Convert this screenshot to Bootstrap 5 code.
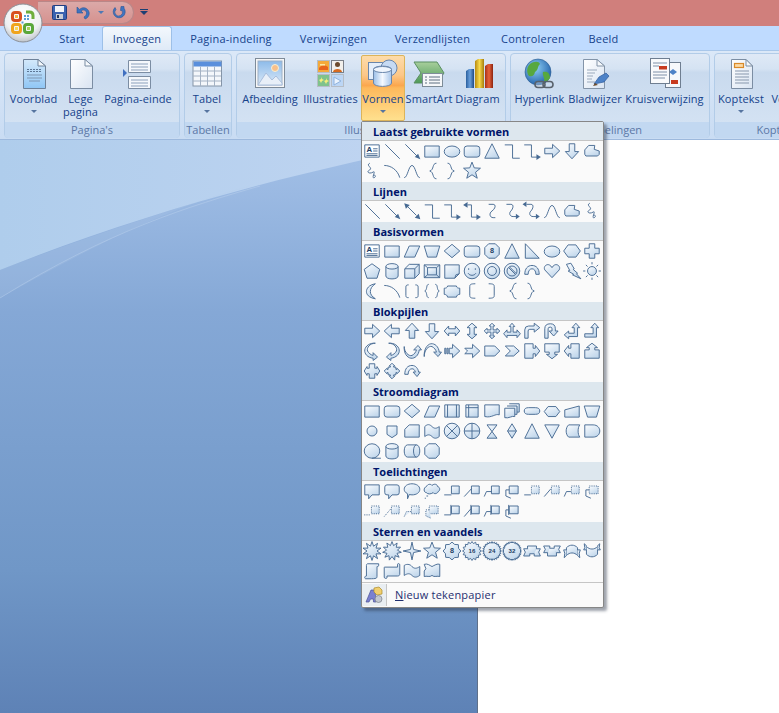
<!DOCTYPE html>
<html lang="nl">
<head>
  <meta charset="UTF-8">
  <meta name="viewport" content="width=device-width, initial-scale=1.0">
  <title>Word 2007 - Vormen</title>
  <link href="https://cdn.jsdelivr.net/npm/bootstrap@5.3.3/dist/css/bootstrap.min.css" rel="stylesheet">
  <style>
    html, body { height: 100%; }
    body { font-family: "Open Sans", "Liberation Sans", sans-serif; font-size: 11px; color: #15428b; background: #6f95c6; overflow: hidden; }
    .app-shell { width: 779px; height: 713px; overflow: hidden; }

    /* title bar and quick access */
    .title-strip { height: 26px; background: #d07f7c; padding-left: 38px; }
    .qat-pill { width: 96px; height: 23px; margin-top: 1px; border: 1px solid #b98788; border-left: 0; border-radius: 0 12px 12px 0 / 0 12px 12px 0; background: linear-gradient(#dba9a8, #d6928f); padding-left: 14px; gap: 8px; }
    .qat-drop { width: 5px; height: 3px; border-top: 3px solid #4d79b5; border-left: 3px solid transparent; border-right: 3px solid transparent; box-sizing: content-box; height: 0; width: 0; }
    .qat-custom { margin-left: 6px; margin-top: 9px; width: 8px; }
    .qat-custom b { display: block; height: 1px; background: #1d3f73; margin-bottom: 1px; }
    .qat-custom i { display: block; width: 0; border-top: 4px solid #1d3f73; border-left: 4px solid transparent; border-right: 4px solid transparent; }
    .office-orb { position: absolute; left: 3px; top: 3px; width: 40px; height: 40px; z-index: 5; }

    /* tabs */
    .tab-strip { height: 24px; padding-left: 44px; background: #bfdbff; flex-wrap: nowrap; }
    .tab-strip .nav-link { padding: 3px 0 0; height: 24px; text-align: center; color: #15428b; font-size: 11px; line-height: 17px; letter-spacing: .2px; border: 1px solid transparent; border-bottom: 0; border-radius: 3px 3px 0 0; }
    .tab-strip .nav-link.active { background: linear-gradient(#f3f8fd, #dfeaf7); border-color: #9dc0e8; color: #15428b; }
    .tw-start { width: 56px; margin-right: 2px; }
    .tw-inv { width: 70px; }
    .tw-pag { width: 118px; }
    .tw-ver { width: 87px; }
    .tw-vrz { width: 111px; }
    .tw-con { width: 90px; }
    .tw-bee { width: 51px; }

    /* ribbon */
    .ribbon-band { height: 90px; padding: 2px 0 0 4px; gap: 4px; background: linear-gradient(#dbe8f8, #c9dcf3); border-top: 1px solid #a9c7ea; border-bottom: 1px solid #9db9dd; overflow: hidden; }
    .rb-group { height: 85px; flex: 0 0 auto; border: 1px solid #b2cce8; border-radius: 4px; background: linear-gradient(#dfe9f6 0, #d5e3f3 18%, #c9daee 22%, #d6e4f4 100%); padding: 1px 3px 0 1px; }
    .rb-label { height: 16px; margin: 0 -3px 0 -1px; background: #c2d8f1; text-align: center; line-height: 15px; color: #5b77a6; font-size: 11px; border-radius: 0 0 3px 3px; white-space: nowrap; overflow: hidden; }
    .rb-body { height: 67px; }
    .rb-btn { display: flex; flex-direction: column; align-items: center; flex: 0 0 auto; height: 66px; padding: 2px 0 0; border: 1px solid transparent; border-radius: 2px; color: #15428b; font-size: 11px; line-height: 13px; letter-spacing: .1px; --bs-btn-active-color: #15428b; }
    .rb-btn svg { width: 32px; height: 32px; flex: 0 0 auto; margin-bottom: 2px; }
    .rb-btn.is-open { border-color: #dcb45a; background: linear-gradient(#fddcaa 0, #fcc788 30%, #fba74e 46%, #fdb95c 50%, #ffe08e 100%); }
    .rb-caret { display: block; width: 0; margin-top: 5px; border-top: 3px solid #56749f; border-left: 3px solid transparent; border-right: 3px solid transparent; }
    .w-vb { width: 55px; } .w-lp { width: 39px; } .w-pe { width: 76px; } .w-tb { width: 42px; }
    .w-af { width: 64px; } .w-il { width: 57px; margin-right: 2px; } .w-vo { width: 44px; } .w-sa { width: 48px; } .w-di { width: 49px; }
    .w-hy { width: 55px; } .w-bl { width: 56px; } .w-kr { width: 83px; }
    .w-ko { width: 50px; } .w-vt { width: 60px; }
    .gw-pag { width: 176px; } .gw-tab { width: 48px; } .gw-ill { width: 270px; } .gw-kop { width: 200px; } .gw-kt { width: 196px; }

    /* workspace */
    .work-area { height: 573px; background: #6f95c6; }
    .work-back { position: absolute; left: 0; top: 0; width: 100%; height: 100%; }
    .doc-sheet { width: 302px; background: #fff; border-left: 1px solid #5f7089; z-index: 1; }

    /* shapes menu */
    .shape-menu { left: 361px; top: 121px; width: 243px; height: 487px; padding: 0; margin: 0; border: 1px solid #868686; border-radius: 2px; background: #fafafa; box-shadow: 3px 3px 3px rgba(40, 50, 70, .45); font-size: 11px; z-index: 10; }
    .shape-head { height: 19px; margin: 0; padding: 2px 0 0 11px; background: #dde7ee; border-bottom: 1px solid #c5c5c5; font-weight: 700; font-size: 11px; line-height: 16px; color: #00156a; }
    .shape-grid { display: grid; grid-template-columns: repeat(12, 20px); grid-auto-rows: 20px; padding: 0 0 1px; }
    .shape-grid svg { width: 20px; height: 20px; display: block; }
    .shape-foot { height: 24px; border-top: 1px solid #c5c5c5; }
    .foot-icon { width: 25px; margin: 1px 0 0; background: #e9eef2; border-right: 1px solid #c5c5c5; }
    .foot-icon svg { width: 20px; height: 20px; }
    .foot-text { padding: 2px 0 0 8px; color: #1f2f6f; font-size: 11px; letter-spacing: .2px; }
  </style>
</head>
<body>
<div class="app-shell position-relative">

  <svg width="0" height="0" class="position-absolute">
    <defs>
      <linearGradient id="sf" x1="0" y1="0" x2="0.6" y2="1"><stop offset="0" stop-color="#fbfdff"/><stop offset="1" stop-color="#c3d8ec"/></linearGradient>
      <linearGradient id="pageWhite" x1="0" y1="0" x2="1" y2="1"><stop offset="0" stop-color="#fff"/><stop offset="1" stop-color="#d9e4f2"/></linearGradient>
      <linearGradient id="pageBlue" x1="0" y1="0" x2="0" y2="1"><stop offset="0" stop-color="#d4e9fb"/><stop offset="1" stop-color="#8fc6f5"/></linearGradient>
      <linearGradient id="barB" x1="0" y1="0" x2="1" y2="0"><stop offset="0" stop-color="#2a5f9e"/><stop offset=".5" stop-color="#6aa0dc"/><stop offset="1" stop-color="#1f4a85"/></linearGradient>
      <linearGradient id="barY" x1="0" y1="0" x2="1" y2="0"><stop offset="0" stop-color="#b78a10"/><stop offset=".5" stop-color="#f7d94c"/><stop offset="1" stop-color="#a67c0c"/></linearGradient>
      <linearGradient id="barR" x1="0" y1="0" x2="1" y2="0"><stop offset="0" stop-color="#a5301a"/><stop offset=".5" stop-color="#e8623c"/><stop offset="1" stop-color="#8c2410"/></linearGradient>
      <radialGradient id="globeFill" cx=".4" cy=".35" r=".7"><stop offset="0" stop-color="#8fd0f5"/><stop offset="1" stop-color="#1f5ea8"/></radialGradient>
      <linearGradient id="sky" x1="0" y1="0" x2="0" y2="1"><stop offset="0" stop-color="#8dbbea"/><stop offset="1" stop-color="#dbe9f7"/></linearGradient>
      <linearGradient id="smartG" x1="0" y1="0" x2="0" y2="1"><stop offset="0" stop-color="#a8cf9c"/><stop offset="1" stop-color="#4d9a58"/></linearGradient>
      <linearGradient id="cylF" x1="0" y1="0" x2="1" y2="0"><stop offset="0" stop-color="#9bbfe8"/><stop offset=".5" stop-color="#f5f9ff"/><stop offset="1" stop-color="#a8c6ea"/></linearGradient>
      <radialGradient id="orbFill" cx=".5" cy=".3" r=".8"><stop offset="0" stop-color="#fff"/><stop offset=".6" stop-color="#eef0f2"/><stop offset="1" stop-color="#aab1bb"/></radialGradient>
    </defs>
  </svg>

  <svg class="office-orb" viewBox="0 0 40 40">
    <circle cx="20" cy="20" r="19" fill="url(#orbFill)" stroke="#8b8f96"/>
    <g fill="none" stroke-width="3">
      <rect x="9.5" y="9.5" width="8" height="8" rx="2.5" stroke="#d8501f"/>
      <rect x="9.5" y="21.5" width="8" height="8" rx="2.5" stroke="#f0a41d"/>
      <rect x="21.5" y="21.5" width="8" height="8" rx="2.5" stroke="#5aa73a"/>
      <path d="M23 9H26.5Q30 9 30 12.5V16" stroke="#6fae3c"/>
    </g>
    <rect x="12" y="12" width="3" height="3" fill="#f4b73f"/>
    <rect x="12" y="24" width="3" height="3" fill="#f9d65a"/>
    <rect x="24" y="24" width="3" height="3" fill="#a4d25c"/>
    <path d="M21 12h2v2h-2ZM24 12h2v2h-2ZM21 15h2v2h-2ZM24 15h2v2h-2ZM18.5 18.5h2v2h-2Z" fill="#5b9fd6"/>
  </svg>

  <header class="title-strip d-flex">
    <div class="qat-pill d-flex align-items-center">
      <svg width="15" height="15" viewBox="0 0 15 15"><rect x=".5" y=".5" width="14" height="14" rx="1" fill="#3b62b0" stroke="#223f80"/><rect x="3" y="1" width="9" height="6" fill="#f1f4fa"/><rect x="4" y="9" width="7" height="5" fill="#c9cdd6"/><rect x="5" y="10" width="2" height="3" fill="#26365e"/></svg>
      <svg width="15" height="15" viewBox="0 0 15 15"><path d="M2 2V8H8L6 6C8 4.2 11 5 11.5 7.5C11.9 9.5 10.6 11.2 9 12L10 14C13 13 14.8 10 14 7C13 3 8 1.2 4.6 4.4Z" fill="#3f74c0" stroke="#2a5596" stroke-width=".6"/></svg>
      <i class="qat-drop"></i>
      <svg width="14" height="15" viewBox="0 0 14 15"><path d="M9 1.5H12V3.2A6 6 0 1 1 3 2.5L4 4.5A3.8 3.8 0 1 0 10 5.5H8.5Z" fill="#3f74c0" stroke="#2a5596" stroke-width=".6"/></svg>
    </div>
    <div class="qat-custom"><b></b><i></i></div>
  </header>

  <ul class="nav tab-strip">
    <li class="nav-item"><a class="nav-link tw-start" href="#">Start</a></li>
    <li class="nav-item"><a class="nav-link tw-inv active" href="#">Invoegen</a></li>
    <li class="nav-item"><a class="nav-link tw-pag" href="#">Pagina-indeling</a></li>
    <li class="nav-item"><a class="nav-link tw-ver" href="#">Verwijzingen</a></li>
    <li class="nav-item"><a class="nav-link tw-vrz" href="#">Verzendlijsten</a></li>
    <li class="nav-item"><a class="nav-link tw-con" href="#">Controleren</a></li>
    <li class="nav-item"><a class="nav-link tw-bee" href="#">Beeld</a></li>
  </ul>

  <section class="ribbon-band d-flex">
    <div class="rb-group gw-pag">
      <div class="rb-body d-flex">
        <button class="btn rb-btn w-vb"><svg viewBox="0 0 32 32"><path d="M5.5 1.5H20L27.5 8V30.5H5.5Z" fill="url(#pageBlue)" stroke="#6f8299"/><path d="M20 1.5V8H27.5Z" fill="#f4f8fc" stroke="#6f8299"/><path d="M9 11.5H24M9 13.5H24" stroke="#5d7796" stroke-dasharray="2 1"/><path d="M9 17H24M9 20H24M11 23H22" stroke="#7f96b3" fill="none"/></svg><span>Voorblad</span><i class="rb-caret"></i></button>
        <button class="btn rb-btn w-lp"><svg viewBox="0 0 32 32"><path d="M5.5 1.5H20L27.5 8V30.5H5.5Z" fill="url(#pageWhite)" stroke="#7b8da3"/><path d="M20 1.5V8H27.5Z" fill="#f6f9fc" stroke="#7b8da3"/></svg><span>Lege<br>pagina</span></button>
        <button class="btn rb-btn w-pe"><svg viewBox="0 0 32 32"><path d="M6.5 2.5H28.5V14.5H6.5ZM6.5 18.5H28.5V30.5H6.5Z" fill="#f5f8fc" stroke="#7b8da3"/><path d="M9 6H26M9 9H26M9 12H26M9 22H26M9 25H26M9 28H26" stroke="#8ba0bb"/><path d="M1 11V19L5 15Z" fill="#3f6fc0"/></svg><span>Pagina-einde</span></button>
      </div>
      <div class="rb-label">Pagina's</div>
    </div>
    <div class="rb-group gw-tab">
      <div class="rb-body d-flex">
        <button class="btn rb-btn w-tb"><svg viewBox="0 0 32 32"><rect x="2" y="3" width="28.5" height="25" fill="#f4f7fb" stroke="#8595a8"/><rect x="2.5" y="3.5" width="28" height="5" fill="#5a8fdc"/><path d="M2 13H30M2 18H30M2 23H30M9.5 8.5V28M16.5 8.5V28M23.5 8.5V28" stroke="#a4b2c4"/></svg><span>Tabel</span><i class="rb-caret"></i></button>
      </div>
      <div class="rb-label">Tabellen</div>
    </div>
    <div class="rb-group gw-ill">
      <div class="rb-body d-flex">
        <button class="btn rb-btn w-af"><svg viewBox="0 0 32 32"><rect x="1.5" y=".5" width="29" height="29" fill="#f7f7f7" stroke="#7e8b99"/><rect x="4" y="3" width="24" height="24" fill="url(#sky)" stroke="#9db0c6"/><circle cx="21" cy="10" r="3.5" fill="#f8c08a" stroke="#f6f0d6"/><path d="M4 27L12 15L18 22L22 18L28 25V27Z" fill="#e8eff8" stroke="#a9bedc"/></svg><span>Afbeelding</span></button>
        <button class="btn rb-btn w-il"><svg viewBox="0 0 32 32"><rect x="2.5" y="2.5" width="12" height="12" fill="#f4a93a" stroke="#b6bdc6"/><path d="M4 10C7 6 10 7 13 9V12H4Z" fill="#e8641d"/><rect x="5" y="6" width="5" height="1.5" fill="#fbe7a5"/><rect x="16.5" y="2.5" width="12" height="12" fill="#f2f0ec" stroke="#7a7f88"/><circle cx="22.5" cy="6.5" r="2.5" fill="#6d4a2d"/><path d="M18 14C18 10 27 10 27 14Z" fill="#d86a1f"/><rect x="2.5" y="16.5" width="12" height="12" fill="#7fc28c" stroke="#b6bdc6"/><path d="M6 19l1 2 2 1-2 1-1 2-1-2-1-1 2-1ZM11 20l1 2 2 1-2 1-1 2-1-2-1-1 2-1Z" fill="#f6ef7c"/><rect x="16.5" y="16.5" width="12" height="12" fill="#bcd6f5" stroke="#b6bdc6"/><path d="M19 19L26 23L19 27Z" fill="#eaf3fd" stroke="#8fb2de"/></svg><span>Illustraties</span></button>
        <button class="btn rb-btn w-vo is-open"><svg viewBox="0 0 32 32"><rect x="1.5" y="4.5" width="18" height="17" fill="#e4eefa" stroke="#6a86ab"/><circle cx="22" cy="10" r="8" fill="#c6daf3" stroke="#6a86ab"/><path d="M6.5 11.5C6.5 7 24.5 7 24.5 11.5V25C24.5 29.5 6.5 29.5 6.5 25Z" fill="url(#cylF)" stroke="#6a86ab"/><ellipse cx="15.5" cy="11.5" rx="9" ry="3" fill="#eff5fd" stroke="#6a86ab"/></svg><span>Vormen</span><i class="rb-caret"></i></button>
        <button class="btn rb-btn w-sa"><svg viewBox="0 0 32 32"><path d="M1 4H24L31 15L24 25H1L8 15Z" fill="url(#smartG)" stroke="#5b8f63"/><rect x="9.5" y="15.5" width="20" height="13" fill="#f5f7f9" stroke="#7d8c98"/><path d="M12 19H14M16 19H27M12 22H14M16 22H27M12 25H14M16 25H27" stroke="#5c6f80"/></svg><span>SmartArt</span></button>
        <button class="btn rb-btn w-di"><svg viewBox="0 0 32 32"><path d="M4 13L7 11H12V30H4Z" fill="url(#barB)"/><path d="M13 3L16 1H22V30H13Z" fill="url(#barY)"/><path d="M23 8L26 6H31V30H23Z" fill="url(#barR)"/></svg><span>Diagram</span></button>
      </div>
      <div class="rb-label">Illustraties</div>
    </div>
    <div class="rb-group gw-kop">
      <div class="rb-body d-flex">
        <button class="btn rb-btn w-hy"><svg viewBox="0 0 32 32"><circle cx="14" cy="14" r="13" fill="url(#globeFill)" stroke="#2a5b8e" stroke-width=".6"/><path d="M6 6C10 3 15 3 16 6C13 9 15 11 11 14C10 18 8 19 5 18C2 14 3 9 6 6ZM19 14C24 13 26 16 26 20C24 23 21 25 20 23C21 20 18 17 19 14Z" fill="#57a83f"/><g fill="none" stroke="#59626c" stroke-width="1.6"><rect x="11" y="23.5" width="10" height="6" rx="3" fill="#d5dae0" fill-opacity=".4"/><rect x="19" y="23.5" width="10" height="6" rx="3"/></g></svg><span>Hyperlink</span></button>
        <button class="btn rb-btn w-bl"><svg viewBox="0 0 32 32"><path d="M4.5 1.5H18L25.5 8V30.5H4.5Z" fill="url(#pageWhite)" stroke="#8394a8"/><path d="M18 1.5V8H25.5Z" fill="#f6f9fc" stroke="#8394a8"/><path d="M8 12H18M8 15H16M8 18H14M8 21H13M8 24H16" stroke="#9aa9bc"/><path d="M15 26L20 19L27 15L30 18L25 24Z" fill="#4d82c7" stroke="#2f5c9c" stroke-width=".7"/><path d="M14 28L16 25L19 27Z" fill="#6b4a2a"/></svg><span>Bladwijzer</span></button>
        <button class="btn rb-btn w-kr"><svg viewBox="0 0 32 32"><rect x="16.5" y="4.5" width="15" height="25" fill="#f6f8fb" stroke="#6f7e91"/><rect x="22" y="22" width="7" height="4" fill="#c83a1f"/><path d="M24 11L28 14L24 17L20 14Z" fill="#4d82c7"/><rect x="1.5" y=".5" width="19" height="25" fill="#f9fafc" stroke="#6f7e91"/><path d="M4 5H18M4 8H10M4 14H18M4 17H18M4 20H16" stroke="#7e90a8"/><rect x="10" y="8" width="8" height="3.5" fill="#c83a1f"/></svg><span>Kruisverwijzing</span></button>
      </div>
      <div class="rb-label">Koppelingen</div>
    </div>
    <div class="rb-group gw-kt">
      <div class="rb-body d-flex">
        <button class="btn rb-btn w-ko"><svg viewBox="0 0 32 32"><path d="M6.5 1.5H21L27.5 8V30.5H6.5Z" fill="url(#pageWhite)" stroke="#7b8da3"/><path d="M21 1.5V8H27.5Z" fill="#f6f9fc" stroke="#7b8da3"/><rect x="9.5" y="5.5" width="9" height="4" fill="#fbd9a3" stroke="#d98a2b" stroke-width="1.2"/><path d="M10 13H24M10 16H24M10 19H24M10 22H24M10 25H24" stroke="#8797ac"/></svg><span>Koptekst</span><i class="rb-caret"></i></button>
        <button class="btn rb-btn w-vt"><svg viewBox="0 0 32 32"></svg><span>Voettekst</span></button>
      </div>
      <div class="rb-label">Koptekst en voettekst</div>
    </div>
  </section>

  <main class="work-area position-relative d-flex justify-content-end">
    <svg class="work-back" viewBox="0 0 779 573" preserveAspectRatio="none">
      <defs>
        <linearGradient id="backLow" x1="0" y1="0" x2="0" y2="1"><stop offset="0" stop-color="#a4c1e8"/><stop offset=".3" stop-color="#85a8d6"/><stop offset=".75" stop-color="#7097c7"/><stop offset="1" stop-color="#5e82b6"/></linearGradient>
        <linearGradient id="backTop" x1="0" y1="0" x2="1" y2="0"><stop offset="0" stop-color="#afcdec"/><stop offset="1" stop-color="#c3d6f2"/></linearGradient>
      </defs>
      <rect width="779" height="573" fill="url(#backLow)"/>
      <path d="M0 0H480V-4C300 30 150 70 0 130Z" fill="url(#backTop)"/>
      <path d="M0 158C110 90 190 66 260 46" fill="none" stroke="#c3d6ef" stroke-opacity=".4"/>
      <path d="M0 130C100 92 170 70 250 46C170 66 90 108 0 158Z" fill="#b4cdec" fill-opacity=".2"/>
    </svg>
    <div class="doc-sheet"></div>
  </main>

  <div class="dropdown-menu show shape-menu">
    <div id="shapeSections"></div>
    <div class="shape-foot d-flex">
      <div class="foot-icon d-flex align-items-center justify-content-center">
        <svg viewBox="0 0 20 20"><path d="M2 17L7 5H11L12 17H9.5L9.3 14H6.5L5 17Z" fill="#7a80cf" stroke="#4c5296" stroke-width=".7"/><path d="M10 3L15 2L18 5V9L13 10L10 7Z" fill="#f1cf6d" stroke="#a98a2d" stroke-width=".7"/><circle cx="14.5" cy="14" r="3.5" fill="#c4c9d1" stroke="#777d87" stroke-width=".7"/></svg>
      </div>
      <div class="foot-text d-flex align-items-center"><span><u>N</u>ieuw tekenpapier</span></div>
    </div>
  </div>
</div>

<script>
  // shape library for the gallery, 20x20 cells
  // parts split by |, ~ open line, ^ filled head, ! dashed open line, @ text
  function star(n, R, r) {
    let d = '';
    for (let i = 0; i < n * 2; i++) {
      const a = Math.PI * i / n - Math.PI / 2;
      const v = i % 2 ? r : R;
      d += (i ? 'L' : 'M') + (10 + v * Math.cos(a)).toFixed(1) + ' ' + (10 + v * Math.sin(a)).toFixed(1);
    }
    return d + 'Z';
  }

  const boxA = 'M9.5 5.5H16.5V12.5H9.5Z';
  const boxB = '!M9.5 5.5H16.5V12.5H9.5Z';
  const bar = '~M9 4.5V13.5';

  const S = {
    txt: '=M3.5 4.5H16.5V15.5H3.5Z|~M11 8H15M11 10H15M5 12.5H15M5 14H15|@A',
    line: '~M4 4L17 17',
    arrow: '~M4 4L15 15|^M17.5 17.5L12.5 15.5L15.5 12.5Z',
    dbl: '~M6 6L14 14|^M3 3L8 4.5L4.5 8ZM17.5 17.5L12.5 16L16 12.5Z',
    rect: 'M3.5 5.5H16.5V15.5H3.5Z',
    oval: 'M3 10.5a7 5 0 1 0 14 0a7 5 0 1 0-14 0Z',
    round: 'M5.5 5.5H14.5Q17 5.5 17 8V13Q17 15.5 14.5 15.5H5.5Q3 15.5 3 13V8Q3 5.5 5.5 5.5Z',
    tri: 'M10 3.5L16.5 16.5H3.5Z',
    elbow: '~M3.5 4.5H10.5V16.5H17',
    elbowA: '~M3 4.5H9.5V15.5H15|^M18 15.5L14 13V18Z',
    elbowD: '~M6 4.5H9.5V15.5H15|^M2 4.5L6 2V7ZM18 15.5L14 13V18Z',
    rA: 'M3.5 7.5H10.5V4L17 10L10.5 16V12.5H3.5Z',
    lA: 'M16.5 7.5H9.5V4L3 10L9.5 16V12.5H16.5Z',
    uA: 'M7.5 16.5V9.5H4L10 3L16 9.5H12.5V16.5Z',
    dA: 'M7.5 3.5V10.5H4L10 17L16 10.5H12.5V3.5Z',
    free: 'M3.5 9L7 5H12.5L12 8.5L16.5 10V13L15 14.5H4.5L3.5 13Z',
    scrib: '~M8 3C4 5 11 7 8 9C4 11 8 13 11 11C14 9 9 17 12 16C14 15 13 13 11 14',
    curve: '~M3 5C9 5 15 9 17 16',
    wave: '~M3 16C6 16 7 5 10 5C13 5 14 16 17 16',
    lbrace: '~M14 3C10 3 12 9 8 10C12 11 10 17 14 17',
    rbrace: '~M6 3C10 3 8 9 12 10C8 11 10 17 6 17',
    star5: star(5, 8, 3.4),
    curveS: '~M7 4H11C14 4 13 8 10 10C7 12 8 16 11 16H13',
    curveA: '~M5 4H9C12 4 11 8 9 10C7 12 8 15 11 15H14|^M17 15L13.5 12.5V17.5Z',
    curveD: '~M5 4H9C12 4 11 8 9 10C7 12 8 15 11 15H14|^M1.5 4L5 1.5V6.5ZM17 15L13.5 12.5V17.5Z',
    para: 'M7.5 5.5H17L12.5 15.5H3Z',
    trap: 'M3 5.5H17L14 15.5H6Z',
    diamond: 'M10 4L17 10L10 16L3 10Z',
    oct: 'M7 3.5H13L16.5 7V13L13 16.5H7L3.5 13V7Z|@8',
    rtri: 'M4 3.5L16.5 16.5H4Z',
    hex: 'M6.5 4.5H13.5L17.5 10L13.5 15.5H6.5L2.5 10Z',
    plus: 'M7.5 3.5H12.5V7.5H16.5V12.5H12.5V16.5H7.5V12.5H3.5V7.5H7.5Z',
    pent: 'M10 3.5L17 8.5L14.5 16.5H5.5L3 8.5Z',
    can: 'M4.5 6C4.5 2.5 15.5 2.5 15.5 6V14.5C15.5 18 4.5 18 4.5 14.5Z|~M4.5 6C4.5 9 15.5 9 15.5 6',
    cube: 'M3.5 8L7.5 4H16.5V12.5L12.5 16.5H3.5Z|~M3.5 8H12.5V16.5M12.5 8L16.5 4',
    bevel: 'M3 4.5H17V16H3Z|~M3 4.5L6 7M17 4.5L14 7M3 16L6 13.5M17 16L14 13.5|M6 7H14V13.5H6Z',
    fold: 'M3.5 4.5H16.5V12.5L12.5 16.5H3.5Z|~M12.5 16.5L13.5 13.5L16.5 12.5',
    smile: 'M3 10a7 7 0 1 0 14 0a7 7 0 1 0-14 0Z|~M7 7.5V9M13 7.5V9M6.5 12C8 14.5 12 14.5 13.5 12',
    donut: 'M3 10a7 7 0 1 0 14 0a7 7 0 1 0-14 0ZM6 10a4 4 0 1 0 8 0a4 4 0 1 0-8 0Z',
    nosym: 'M3 10a7 7 0 1 0 14 0a7 7 0 1 0-14 0ZM5.5 10a4.5 4.5 0 1 0 9 0a4.5 4.5 0 1 0-9 0Z|~M7 7L13 13M8 6.5L13.5 12',
    barc: 'M3.5 13C3.5 8 6 5 10 5C14 5 16.5 8 16.5 13H13.5C13.5 10 12 8 10 8C8 8 6.5 10 6.5 13Z',
    heart: 'M10 16L3.5 9C2 6 5 3.5 7.5 4.5C8.7 5 9.5 6 10 7C10.5 6 11.3 5 12.5 4.5C15 3.5 18 6 16.5 9Z',
    bolt: 'M5 4L9 3L12 8L11 8.5L15 12L14 12.5L18 17L10.5 13.5L11.5 13L6.5 10L8 9.5Z',
    sun: '~M10 2V4M10 16V18M2 10H4M16 10H18M4.5 4.5L6 6M14 14L15.5 15.5M4.5 15.5L6 14M14 6L15.5 4.5|M6 10a4 4 0 1 0 8 0a4 4 0 1 0-8 0Z',
    moon: 'M13 3.5C7 4.5 5 8 5 10.5C5 13 7 16 13 17C10 15 8.5 13 8.5 10.5C8.5 8 10 5.5 13 3.5Z',
    brack2: '~M7 4.5C5 4.5 4.5 5 4.5 6.5V14C4.5 15.5 5 16 7 16M13 4.5C15 4.5 15.5 5 15.5 6.5V14C15.5 15.5 15 16 13 16',
    brace2: '~M7 4C4.5 4 6 9 3.5 10C6 11 4.5 16 7 16M13 4C15.5 4 14 9 16.5 10C14 11 15.5 16 13 16',
    plaque: 'M6 5.5H14C14 7 15.5 7.5 17 7.5V13C15.5 13 14 14 14 15.5H6C6 14 4.5 13 3 13V7.5C4.5 7.5 6 7 6 5.5Z',
    lbrack: '~M13 3.5C9 3.5 8 4 8 6V14C8 16 9 16.5 13 16.5',
    rbrack: '~M7 3.5C11 3.5 12 4 12 6V14C12 16 11 16.5 7 16.5',
    lr: 'M3 10L7 5.5V8H13V5.5L17 10L13 14.5V12H7V14.5Z',
    ud: 'M10 3L14.5 7H12V13H14.5L10 17L5.5 13H8V7H5.5Z',
    quad: 'M10 3L12.5 5.5H11V9H14.5V7.5L17 10L14.5 12.5V11H11V14.5H12.5L10 17L7.5 14.5H9V11H5.5V12.5L3 10L5.5 7.5V9H9V5.5H7.5Z',
    lru: 'M10 3L12.5 6H11V11H14.5V9L17.5 12.5L14.5 16V14H5.5V16L2.5 12.5L5.5 9V11H9V6H7.5Z',
    bent: 'M3.5 16.5V9Q3.5 5.5 7 5.5H12V3L17 7L12 11V8.5H8Q6.5 8.5 6.5 10V16.5Z',
    uturn: 'M3.5 16.5V8Q3.5 3.5 8.5 3.5Q13 3.5 13 8V10H15.5L11.5 14.5L7.5 10H10V8Q10 6.5 8.5 6.5Q6.5 6.5 6.5 8V16.5Z',
    lup: 'M3 13.5L7 10V12H12V7H10L13.5 3L17 7H15V15H7V17Z',
    bup: 'M3.5 12.5H11V7H9L12.5 3L16 7H14V15.5H3.5Z',
    curR: 'M13 3C8 3 5 7 6 10C7 12 9 13.5 11 14V11.5L15 15.5L11 18.5V16.5C6 16 3 12.5 3.5 9C4 5.5 8 2.5 13 3Z',
    curL: 'M7 3C12 3 15 7 14 10C13 12 11 13.5 9 14V11.5L5 15.5L9 18.5V16.5C14 16 17 12.5 16.5 9C16 5.5 12 2.5 7 3Z',
    curU: 'M3 6C3 11 7 15 10 14C12 13 13.5 11 14 9H11.5L15.5 5L18.5 9H16.5C16 14 12.5 17 9 16.5C5.5 16 2.5 12 3 6Z',
    curD: 'M3 15C3 9 7 5 10 6C12 7 13.5 9 14 11H11.5L15.5 15L18.5 11H16.5C16 6 12.5 3 9 3.5C5.5 4 2.5 9 3 15Z',
    striped: 'M3.5 7.5H4.5V12.5H3.5ZM5.5 7.5H6.5V12.5H5.5ZM7.5 7.5H10.5V4L17 10L10.5 16V12.5H7.5Z',
    notched: 'M3.5 7.5H10.5V4L17 10L10.5 16V12.5H3.5L6 10Z',
    pentA: 'M3.5 5.5H12.5L17 10L12.5 14.5H3.5Z',
    chev: 'M4 5.5H11.5L16.5 10L11.5 14.5H4L8.5 10Z',
    rCall: 'M3.5 3.5H11V7.5H13V5L17 10L13 15V12.5H11V16.5H3.5Z',
    dCall: 'M3.5 3.5H16.5V11H12.5V13H15L10 17L5 13H7.5V11H3.5Z',
    lCall: 'M16.5 3.5H9V7.5H7V5L3 10L7 15V12.5H9V16.5H16.5Z',
    uCall: 'M3.5 16.5H16.5V9H12.5V7H15L10 3L5 7H7.5V9H3.5Z',
    lrCall: 'M7.5 3.5H12.5V7.5H14.5V6L17 10L14.5 14V12.5H12.5V16.5H7.5V12.5H5.5V14L3 10L5.5 6V7.5H7.5Z',
    qCall: 'M10 3L12.5 5.5H11.5V6.5H13.5V8.5H14.5V7.5L17 10L14.5 12.5V11.5H13.5V13.5H11.5V14.5H12.5L10 17L7.5 14.5H8.5V13.5H6.5V11.5H5.5V12.5L3 10L5.5 7.5V8.5H6.5V6.5H8.5V5.5H7.5Z',
    circ: 'M3.5 13C3.5 8 6 5 10 5C13.5 5 15.5 8 16 11H17.5L14.5 15L11 11H13C12.5 9 11.5 8 10 8C8 8 6.5 10 6.5 13Z',
    pred: 'M3.5 4.5H16.5V15.5H3.5Z|~M6 4.5V15.5M14 4.5V15.5',
    intern: 'M4.5 4.5H15.5V15.5H4.5Z|~M7 4.5V15.5M4.5 7H15.5',
    fdoc: 'M3.5 4.5H16.5V13.5C13 12 10 16.5 3.5 15Z',
    multi: 'M7.5 3.5H16.5V11H14|M5.5 5.5H14.5V13H12.5|M3.5 7.5H12.5V15C10 14 7 17 3.5 16Z',
    term: 'M7 7H13Q17 7 17 10Q17 13 13 13H7Q3 13 3 10Q3 7 7 7Z',
    prep: 'M6.5 6L13.5 6L17 10.5L13.5 15H6.5L3 10.5Z',
    input: 'M3.5 9L16.5 5.5V15.5H3.5Z',
    conn: 'M5.5 10a4.5 4.5 0 1 0 9 0a4.5 4.5 0 1 0-9 0Z',
    off: 'M5.5 5.5H14.5V13L10 16L5.5 13Z',
    card: 'M7.5 4.5H16.5V15.5H3.5V8.5Z',
    tape: 'M3.5 6C6 3.5 8 4 10 6C12 8 14 8 16.5 6V15C14 17 12 17 10 15C8 13 6 13 3.5 15Z',
    sumj: 'M3 10a7 7 0 1 0 14 0a7 7 0 1 0-14 0Z|~M5 5L15 15M15 5L5 15',
    orj: 'M3 10a7 7 0 1 0 14 0a7 7 0 1 0-14 0Z|~M10 3V17M3 10H17',
    collate: 'M5.5 4.5H14.5L5.5 16.5H14.5Z',
    sort: 'M10 3.5L14 10L10 16.5L6 10Z|~M6 10H14',
    merge: 'M3.5 4.5H16.5L10 16.5Z',
    stored: 'M7 4.5H17C15 7 15 13 17 15.5H7C4 13 4 7 7 4.5Z',
    delay: 'M3.5 4.5H11C19 4.5 19 15.5 11 15.5H3.5Z',
    seq: 'M3 10a7 6.5 0 1 0 14 0a7 6.5 0 1 0-14 0Z|~M10 16.5H18',
    direct: 'M6 4.5H14C18 4.5 18 15.5 14 15.5H6C2 15.5 2 4.5 6 4.5Z|~M14 4.5C10.5 4.5 10.5 15.5 14 15.5',
    displ: 'M7 3.5H13.5L16.5 7V13L13.5 16.5H7L3.5 13V7Z',
    rCl: 'M3.5 4.5H16.5V13.5H10L7 17V13.5H3.5Z',
    roCl: 'M5.5 4.5H14.5Q16.5 4.5 16.5 6.5V11.5Q16.5 13.5 14.5 13.5H10L7 17V13.5H5.5Q3.5 13.5 3.5 11.5V6.5Q3.5 4.5 5.5 4.5Z',
    ovCl: 'M10 3.5C14 3.5 17 5.5 17 8.5C17 11.5 14 13.5 10 13.5L7.5 13.2L6 17V12.5C4 11.5 3 10 3 8.5C3 5.5 6 3.5 10 3.5Z',
    clCl: 'M5 6C6 3.5 9 3.5 10 5C12 3 15 4 15 6C17.5 6.5 17.5 10 15.5 10.5C15 12.5 12 13 11 11.5C9 13 6 13 5 11.5C2.5 11.5 2 7 5 6Z|~M5 14.5H6.5M3.5 16.5H4.5',
    ln1: boxA + '|~M3 13.5H9.5',
    ln2: boxA + '|~M3 15L9.5 8',
    ln3: boxA + '|~M3 15L5 10.5H9.5',
    ln4: 'M7.5 5.5H15.5V12.5H7.5Z|~M7.5 9H4.5V14.5L9 16.5',
    dh1: boxB + '|~M3 13.5H9',
    dh2: boxB + '|~M3 15L9 8',
    dh3: boxB + '|~M3 15L5 10.5H9',
    dh4: '!M7.5 5.5H15.5V12.5H7.5Z|~M7.5 9H4.5V14.5L9 16.5',
    nb1: boxB + '|!M3 13.5H9',
    nb2: boxB + '|!M3 15L9 8',
    nb3: boxB + '|!M3 15L5 10.5H9',
    nb4: '!M7.5 5.5H15.5V12.5H7.5Z|!M7.5 9H4.5V14.5L9 16.5',
    ab1: boxA + '|' + bar + '|~M3 13.5H9',
    ab2: boxA + '|' + bar + '|~M3 15L9 8',
    ab3: boxA + '|' + bar + '|~M3 15L5 10.5H9',
    ab4: 'M7.5 5.5H15.5V12.5H7.5Z|~M7 4.5V13.5|~M7 9H4.5V14.5L9 16.5',
    exp1: star(10, 8.5, 4.5),
    exp2: star(11, 8.5, 5),
    st4: star(4, 8, 2),
    se8: star(8, 8, 6.4) + '|@8',
    se16: star(16, 8.5, 6.8) + '|@16',
    se24: star(24, 8.5, 7) + '|@24',
    se32: star(32, 8.5, 7.2) + '|@32',
    ribD: 'M6 5.5H14V12.5H6Z|M6 8H2.5L4 11L2.5 14.5H8V12.5|M14 8H17.5L16 11L17.5 14.5H12V12.5',
    ribU: 'M6 7.5H14V14.5H6Z|M6 11.5H2.5L4 8.5L2.5 5.5H8V7.5|M14 11.5H17.5L16 8.5L17.5 5.5H12V7.5',
    crD: 'M5 7C8 4 12 4 15 7V14C12 11 8 11 5 14Z|M5 9H2.5L3.5 12L3 16C4 15 5 14.5 5 14|M15 9H17.5L16.5 12L17 16C16 15 15 14.5 15 14',
    crU: 'M5 6C8 9 12 9 15 6V13C12 16 8 16 5 13Z|M5 9H2.5L3.5 7L3 3.5C4 4 5 5 5 6|M15 9H17.5L16.5 7L17 3.5C16 4 15 5 15 6',
    scrV: 'M6 3.5H16V5C16 6 15 6 14.5 6V15C14.5 17 13 17 4.5 17C3 17 3 14.5 5 14.5V5C5 4 5.5 3.5 6 3.5Z',
    scrH: 'M3.5 6.5H15V4C15 3 17 3 17 4.5V13C17 14 16 14.5 15 14.5H5.5V16C5.5 17 3 17 3 15.5V7C3 6.5 3 6.5 3.5 6.5Z',
    wav: 'M3 5C6 3 9 4.5 10 6C12 8 14 8 17 6V14C14 16 12 16 10 14C8 12 6 12 3 14Z',
    dwav: 'M3 4C6 3 8 5 10 6C12 5 15 3 17 4V15C15 14 12 16 10 14C8 16 5 14 3 15V10L4.5 8Z'
  };

  const sections = [
    ['Laatst gebruikte vormen', 'txt line arrow rect oval round tri elbow elbowA rA dA free scrib curve wave lbrace rbrace star5'],
    ['Lijnen', 'line arrow dbl elbow elbowA elbowD curveS curveA curveD wave free scrib'],
    ['Basisvormen', 'txt rect para trap diamond round oct tri rtri oval hex plus pent can cube bevel fold smile donut nosym barc heart bolt sun moon curve brack2 brace2 plaque lbrack rbrack lbrace rbrace'],
    ['Blokpijlen', 'rA lA uA dA lr ud quad lru bent uturn lup bup curR curL curU curD striped notched pentA chev rCall dCall lCall uCall lrCall qCall circ'],
    ['Stroomdiagram', 'rect round diamond para pred intern fdoc multi term prep input trap conn off card tape sumj orj collate sort tri merge stored delay seq can direct displ'],
    ['Toelichtingen', 'rCl roCl ovCl clCl ln1 ln2 ln3 ln4 dh1 dh2 dh3 dh4 nb1 nb2 nb3 nb4 ab1 ab2 ab3 ab4'],
    ['Sterren en vaandels', 'exp1 exp2 st4 star5 se8 se16 se24 se32 ribD ribU crD crU scrV scrH wav dwav']
  ];

  const INK = '#476a93';

  function partSvg(p) {
    if (p[0] === '~') return `<path d="${p.slice(1)}" fill="none" stroke="${INK}" stroke-width=".85"/>`;
    if (p[0] === '!') return `<path d="${p.slice(1)}" fill="url(#sf)" stroke="${INK}" stroke-width=".85" stroke-dasharray="1 1"/>`;
    if (p[0] === '^') return `<path d="${p.slice(1)}" fill="${INK}"/>`;
    if (p[0] === '=') return `<path d="${p.slice(1)}" fill="#fff" stroke="${INK}" stroke-width=".85"/>`;
    if (p[0] === '@') {
      const t = p.slice(1);
      if (t === 'A') return `<text x="5" y="10.5" font-size="7" font-weight="700" fill="#223d63" font-family="Liberation Sans">A</text>`;
      const size = t.length > 1 ? 5.5 : 6.5;
      return `<text x="10" y="12.2" text-anchor="middle" font-size="${size}" font-weight="700" fill="#223d63" font-family="Liberation Sans">${t}</text>`;
    }
    return `<path d="${p}" fill="url(#sf)" stroke="${INK}" stroke-width=".85"/>`;
  }

  const host = document.getElementById('shapeSections');
  host.innerHTML = sections.map(([title, names]) => {
    const cells = names.split(' ').map(n =>
      `<svg viewBox="1 1 18 18">${S[n].split('|').map(partSvg).join('')}</svg>`).join('');
    return `<h6 class="shape-head">${title}</h6><div class="shape-grid">${cells}</div>`;
  }).join('');
</script>
<script src="https://cdn.jsdelivr.net/npm/bootstrap@5.3.3/dist/js/bootstrap.bundle.min.js"></script>
</body>
</html>
